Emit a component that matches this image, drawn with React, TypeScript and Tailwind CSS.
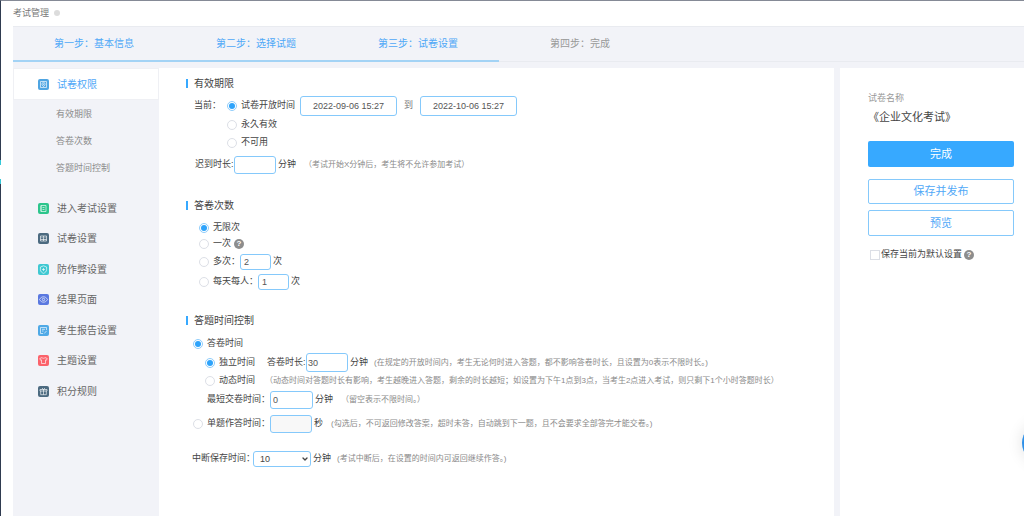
import React from 'react';
import { clsx } from 'clsx';
import { ChevronDown } from 'lucide-react';

const FONT = "font-['Liberation_Sans','Noto_Sans_CJK_SC',sans-serif]";

const steps = ['第一步：基本信息', '第二步：选择试题', '第三步：试卷设置', '第四步：完成'];
const currentStep = 2;

const subItems = ['有效期限', '答卷次数', '答题时间控制'];

const menuItems = [
  {
    label: '进入考试设置',
    color: 'bg-[#2cc58c]',
    icon: <path d="M3 2.5h5v6H3zM4.5 4.5h2M4.5 6.5h2M3 2.5v6" />,
  },
  {
    label: '试卷设置',
    color: 'bg-[#4c6a80]',
    icon: <path d="M2.5 3h6v5h-6zM5.5 3v5M2.5 6.5h6M3.5 4.7h1M6.5 4.7h1" />,
  },
  {
    label: '防作弊设置',
    color: 'bg-[#3fc8d2]',
    icon: <path d="M5.5 1.8 8.6 3v2.6c0 1.8-1.3 3-3.1 3.8-1.8-.8-3.1-2-3.1-3.8V3zM5.5 4v3M4 5.5h3" />,
  },
  {
    label: '结果页面',
    color: 'bg-[#5a78e0]',
    icon: (
      <>
        <path d="M1.5 5.5c2-3.6 6-3.6 8 0-2 3.6-6 3.6-8 0z" />
        <circle cx="5.5" cy="5.5" r="1.2" />
      </>
    ),
  },
  {
    label: '考生报告设置',
    color: 'bg-[#4fa9e6]',
    icon: <path d="M8.5 5V2.5h-6v6H5M4 4.3h3M4 6h1.5M6.2 8.5l2.4-2.6" />,
  },
  {
    label: '主题设置',
    color: 'bg-[#fb626b]',
    icon: <path d="M4 2.5c.5 1 2.5 1 3 0l2.200 1-.7 1.700-1-.3v3.600h-4V4.900l-1 .3-.7-1.700z" />,
  },
  {
    label: '积分规则',
    color: 'bg-[#4c6a80]',
    icon: <path d="M2 3.5h7V5H2zM2.700 5v3.700h5.600V5M5.500 3.500v5.200M4 2l1.500 1.500L7 2" />,
  },
];

const IconBox: React.FC<{ color: string; children: React.ReactNode }> = ({ color, children }) => (
  <span className={clsx('size-[11px] shrink-0 rounded-[2px]', color)}>
    <svg
      viewBox="0 0 11 11"
      className="block size-full"
      fill="none"
      stroke="white"
      strokeOpacity="0.8"
      strokeWidth="0.8"
    >
      {children}
    </svg>
  </span>
);

const Section: React.FC<{ title: string; className?: string; children: React.ReactNode }> = ({
  title,
  className,
  children,
}) => (
  <section className={className}>
    <h2 className="flex h-4 items-center gap-1.5 text-[10px] text-[#444]">
      <span className="h-[9px] w-0.5 bg-[#37a9ff]" />
      {title}
    </h2>
    {children}
  </section>
);

const Row: React.FC<{ className?: string; children: React.ReactNode }> = ({ className, children }) => (
  <div className={clsx('flex items-center whitespace-nowrap', className)}>{children}</div>
);

const Radio: React.FC<{ name: string; label: string; checked?: boolean }> = ({ name, label, checked }) => (
  <label className="flex items-center gap-1">
    <input
      type="radio"
      name={name}
      defaultChecked={checked}
      className="size-[10px] shrink-0 appearance-none rounded-full border border-[#dcdfe6] bg-white bg-clip-content p-px checked:border-[#8fcdfb] checked:bg-[#2da3fb]"
    />
    {label}
  </label>
);

const TextBox: React.FC<{ label: string; value?: string; className?: string }> = ({ label, value, className }) => (
  <input
    type="text"
    aria-label={label}
    defaultValue={value}
    className={clsx('shrink-0 rounded-[3px] border border-[#85c9fb] text-[#555] outline-none', className)}
  />
);

const Hint: React.FC<{ className?: string; children: React.ReactNode }> = ({ className, children }) => (
  <span className={clsx('text-[8px] text-[#8a8a8a]', className)}>{children}</span>
);

const Help = () => (
  <span className="flex size-[10px] items-center justify-center rounded-full bg-[#8d8d8d] text-[8px] leading-none font-bold text-white">
    ?
  </span>
);

const Sidebar = () => (
  <nav className="w-[146px] shrink-0 bg-[#f2f3f8] text-[10px] text-[#666]">
    <a href="#permission" className="flex h-8 items-center gap-2 border border-[#eff0f4] bg-white pl-6 text-[#4fa8f7]">
      <IconBox color="bg-[#4fa5e2]">
        <path d="M2.500 2.500h6v6h-6z" />
        <path d="M5.500 3.300 7 4.300v1.500L5.500 7.600 4 5.800V4.300zM5.500 4.500v1.500" />
      </IconBox>
      试卷权限
    </a>
    <ul className="pt-px text-[9px] text-[#8c8c8c]">
      {subItems.map((item) => (
        <li key={item}>
          <a href="#section" className="flex h-[27px] items-center pl-[43px]">
            {item}
          </a>
        </li>
      ))}
    </ul>
    <ul className="mt-[11px]">
      {menuItems.map((item) => (
        <li key={item.label} className="even:h-[31px] odd:h-[30px]">
          <a href="#menu" className="flex h-full items-center gap-2 pl-[25px]">
            <IconBox color={item.color}>{item.icon}</IconBox>
            {item.label}
          </a>
        </li>
      ))}
    </ul>
  </nav>
);

const Settings = () => (
  <main className="min-w-0 flex-1 bg-white pt-[7px] pl-[27px] text-[9px] text-[#444]">
    <Section title="有效期限">
      <Row className="mt-[5px] h-5 pl-2">
        <span className="w-[33px]">当前：</span>
        <Radio name="period" label="试卷开放时间" checked />
        <TextBox label="开始时间" value="2022-09-06 15:27" className="ml-[5px] h-5 w-[97px] text-center" />
        <span className="w-[23px] text-center text-[#777]">到</span>
        <TextBox label="结束时间" value="2022-10-06 15:27" className="h-5 w-[97px] text-center" />
      </Row>
      <Row className="h-[18px] pl-[41px]">
        <Radio name="period" label="永久有效" />
      </Row>
      <Row className="h-[18px] pl-[41px]">
        <Radio name="period" label="不可用" />
      </Row>
      <Row className="mt-1 h-[18px] pl-[9px]">
        <span className="w-[39px]">迟到时长:</span>
        <TextBox label="迟到时长" className="h-[18px] w-[42px] px-1" />
        <span className="ml-0.5">分钟</span>
        <Hint className="ml-2">（考试开始X分钟后，考生将不允许参加考试）</Hint>
      </Row>
    </Section>

    <Section title="答卷次数" className="mt-[23px]">
      <Row className="mt-[7px] h-4 pl-[13px]">
        <Radio name="times" label="无限次" checked />
      </Row>
      <Row className="h-4 gap-[3px] pl-[13px]">
        <Radio name="times" label="一次" />
        <Help />
      </Row>
      <Row className="mt-0.5 h-4 pl-[13px]">
        <Radio name="times" label="多次：" />
        <TextBox label="多次" value="2" className="h-4 w-[31px] px-[3px]" />
        <span className="ml-0.5">次</span>
      </Row>
      <Row className="mt-1 h-4 pl-[13px]">
        <Radio name="times" label="每天每人：" />
        <TextBox label="每天每人" value="1" className="h-4 w-[31px] px-[3px]" />
        <span className="ml-0.5">次</span>
      </Row>
    </Section>

    <Section title="答题时间控制" className="mt-[22px]">
      <Row className="mt-2 h-4 pl-[7px]">
        <Radio name="timing" label="答卷时间" checked />
      </Row>
      <Row className="mt-px h-[19px] pl-[19px]">
        <Radio name="mode" label="独立时间" checked />
        <span className="ml-3 w-[38px]">答卷时长:</span>
        <TextBox label="答卷时长" value="30" className="ml-px h-[19px] w-[42px] px-px" />
        <span className="ml-0.5">分钟</span>
        <Hint className="ml-1.5">
          (在规定的开放时间内，考生无论何时进入答题，都不影响答卷时长，且设置为0表示不限时长。)
        </Hint>
      </Row>
      <Row className="h-[18px] pl-[19px]">
        <Radio name="mode" label="动态时间" />
        <Hint className="ml-2.5">
          （动态时间对答题时长有影响，考生越晚进入答题，剩余的时长越短；如设置为下午1点到3点，当考生2点进入考试，则只剩下1个小时答题时长）
        </Hint>
      </Row>
      <Row className="mt-px h-[18px] pl-[21px]">
        <span className="w-[63px]">最短交卷时间：</span>
        <TextBox label="最短交卷时间" value="0" className="h-[18px] w-[43px] px-0.5" />
        <span className="ml-0.5">分钟</span>
        <Hint className="ml-2">（留空表示不限时间。）</Hint>
      </Row>
      <Row className="mt-1.5 h-[18px] pl-[7px]">
        <Radio name="timing" label="单题作答时间：" />
        <TextBox label="单题作答时间" className="h-[18px] w-[42px] bg-[#f8f8f8] px-1" />
        <span className="ml-0.5">秒</span>
        <Hint className="ml-2">(勾选后，不可返回修改答案，超时未答，自动跳到下一题，且不会要求全部答完才能交卷。)</Hint>
      </Row>
      <Row className="mt-[18px] h-4 pl-1.5">
        <label htmlFor="keep" className="w-[61px]">
          中断保存时间：
        </label>
        <span className="relative">
          <select
            id="keep"
            defaultValue="10"
            className="block h-4 w-[58px] appearance-none rounded-[3px] border border-[#85c9fb] bg-white pl-1.5 text-[9px] leading-none text-[#444]"
          >
            <option>10</option>
            <option>20</option>
          </select>
          <ChevronDown className="pointer-events-none absolute top-1 right-0.5 size-2" strokeWidth={4} />
        </span>
        <span className="ml-0.5">分钟</span>
        <Hint className="ml-1.5">(考试中断后，在设置的时间内可返回继续作答。)</Hint>
      </Row>
    </Section>
  </main>
);

const Actions = () => (
  <aside className="flex w-[184px] shrink-0 flex-col bg-white pt-6 pr-[10px] pl-7 text-[11px]">
    <p className="h-3 text-[9px] leading-3 text-[#999]">试卷名称</p>
    <p className="mt-[5px] h-4 leading-4 text-[#444]">《企业文化考试》</p>
    <button className="mt-4 h-[26px] rounded-[2px] bg-[#37a9ff] text-white">完成</button>
    <button className="mt-3 h-[25px] rounded-[2px] border border-[#85c9fb] text-[#4fa8f7]">保存并发布</button>
    <button className="mt-1.5 h-[26px] rounded-[2px] border border-[#85c9fb] text-[#4fa8f7]">预览</button>
    <div className="mt-3 flex items-center gap-0.5 pl-0.5 text-[9px] text-[#444]">
      <label className="flex items-center gap-px">
        <input type="checkbox" className="size-[10px] appearance-none border border-[#dcdfe6] bg-white" />
        保存当前为默认设置
      </label>
      <Help />
    </div>
  </aside>
);

export default function App() {
  return (
    <div
      className={clsx(
        'relative flex min-h-screen flex-col overflow-hidden border-t border-l border-t-[#858a96] border-l-[#2f3b50] bg-white',
        FONT,
      )}
    >
      <header className="flex h-[25px] items-center gap-[5px] pl-3 text-[9px] text-[#777]">
        考试管理
        <span className="mb-0.5 size-1.5 rounded-full bg-[#dcdcdc]" />
      </header>

      <div className="ml-3 flex flex-1 flex-col bg-[#f2f3f8]">
        <ol className="flex h-9 border-t border-b border-[#e9ebf0] text-[10px]">
          {steps.map((step, index) => (
            <li
              key={step}
              className={clsx(
                'flex h-[35px] w-[162px] items-center justify-center border-b-2',
                index <= currentStep ? 'border-[#a3d3f5] text-[#4fa8f7]' : 'border-transparent text-[#999]',
              )}
            >
              {step}
            </li>
          ))}
        </ol>
        <div className="mt-1.5 flex flex-1">
          <Sidebar />
          <Settings />
          <div className="w-1.5 shrink-0" />
          <Actions />
        </div>
      </div>

      {/* collapsed menu handle */}
      <div className="fixed top-40 left-0 h-6 w-px border-y-[5px] border-[#35c8d8] bg-white" />
      {/* floating service button, mostly off the right edge */}
      <button
        aria-label="客服"
        className="fixed top-[423px] -right-[38px] size-10 rounded-full bg-[#2f90e8] shadow-[0_0_16px_rgba(0,0,0,0.12)]"
      />
    </div>
  );
}
